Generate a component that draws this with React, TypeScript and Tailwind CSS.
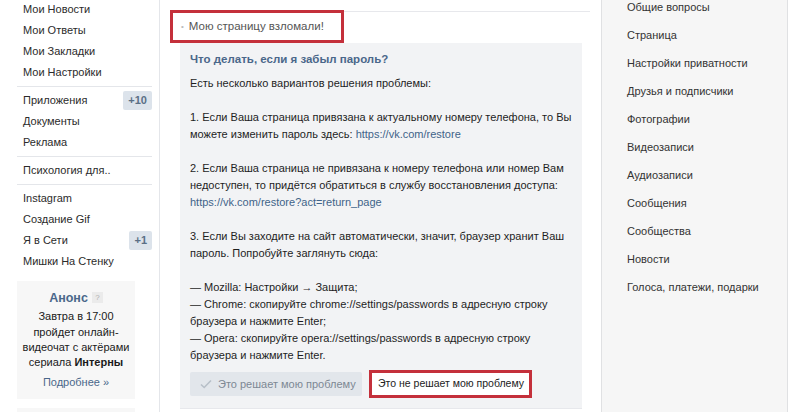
import React from "react";

const leftGroups: { label: string; badge?: string }[][] = [
  [{ label: "Мои Новости" }, { label: "Мои Ответы" }, { label: "Мои Закладки" }, { label: "Мои Настройки" }],
  [{ label: "Приложения", badge: "+10" }, { label: "Документы" }, { label: "Реклама" }],
  [{ label: "Психология для.." }],
  [{ label: "Instagram" }, { label: "Создание Gif" }, { label: "Я в Сети", badge: "+1" }, { label: "Мишки На Стенку" }],
];

const rightItems = [
  "Общие вопросы",
  "Страница",
  "Настройки приватности",
  "Друзья и подписчики",
  "Фотографии",
  "Видеозаписи",
  "Аудиозаписи",
  "Сообщения",
  "Сообщества",
  "Новости",
  "Голоса, платежи, подарки",
];

function LeftMenu() {
  return (
    <div className="w-[160px] shrink-0 border-r border-[#e4e6ea] pl-[17px] pr-[7px]">
      <div className="-mt-[1.5px]">
        {leftGroups.map((group, gi) => (
          <div key={gi}>
            {gi > 0 && <div className="my-[3px] h-px bg-[#e4e6ea]" />}
            {group.map((item) => (
              <div key={item.label} className="flex h-[21px] items-center justify-between pl-[6px] text-[#2b2b2b]">
                <span>{item.label}</span>
                {item.badge && (
                  <span className="flex h-[19px] items-center rounded-[2px] bg-[#dce3eb] px-[5px] text-[11px] font-bold text-[#5a6f86]">
                    {item.badge}
                  </span>
                )}
              </div>
            ))}
          </div>
        ))}
      </div>

      {/* announcement */}
      <div className="mt-[9px] w-[118px] bg-[#f7f7f7] pb-[8px] pt-[8px] text-center">
        <div className="flex items-center justify-center gap-[4px]">
          <span className="text-[12.5px] font-bold text-[#4a678a]">Анонс</span>
          <span className="flex h-[11px] w-[11px] items-center justify-center bg-[#ebebeb] text-[8px] text-[#b0b0b0]">?</span>
        </div>
        <div className="mt-[2px] leading-[15.3px] text-[#1a1a1a]">
          Завтра в 17:00
          <br />
          пройдет онлайн-
          <br />
          видеочат с актёрами
          <br />
          сериала <b>Интерны</b>
        </div>
        <div className="mt-[4px] text-[#4a678a]">Подробнее »</div>
      </div>
      <div className="mt-[9px] h-[20px] w-[118px] bg-[#f7f7f7]" />
    </div>
  );
}

function CheckIcon() {
  return (
    <svg width="12" height="10" viewBox="0 0 12 10" fill="none">
      <path d="M1 5.5 4.2 8.5 11 1.5" stroke="#b7bfc8" strokeWidth="1.6" />
    </svg>
  );
}

function Middle() {
  const link = "text-[#3f6389]";
  return (
    <div className="flex-1">
      <div className="mx-[11px] mt-[11px] h-px bg-[#e7e8ec]" />
      <div className="-mt-[2px] ml-[10px] flex h-[33px] w-[174px] items-center whitespace-nowrap border-[3px] border-[#c4303b] pl-[8px] text-[11.5px] text-[#555]">
        <span className="mr-[5px] text-[8px] text-[#bbb]">•</span>
        <span>Мою страницу взломали!</span>
      </div>
      <div className="ml-[20px] w-[402px] border-b border-[#e7e8ec] bg-[#f2f3f5] px-[10px] pb-[10px] pt-[8px]">
        <div className="text-[11.5px] font-bold leading-[17px] text-[#4a678a]">Что делать, если я забыл пароль?</div>
        <div className="mt-[7px] whitespace-nowrap leading-[17px] text-[#1e1e1e]">
          Есть несколько вариантов решения проблемы:
          <br />
          <br />
          1. Если Ваша страница привязана к актуальному номеру телефона, то Вы
          <br />
          можете изменить пароль здесь: <span className={link}>https://vk.com/restore</span>
          <br />
          <br />
          2. Если Ваша страница не привязана к номеру телефона или номер Вам
          <br />
          недоступен, то придётся обратиться в службу восстановления доступа:
          <br />
          <span className={link}>https://vk.com/restore?act=return_page</span>
          <br />
          <br />
          3. Если Вы заходите на сайт автоматически, значит, браузер хранит Ваш
          <br />
          пароль. Попробуйте заглянуть сюда:
          <br />
          <br />
          — Mozilla: Настройки → Защита;
          <br />
          — Chrome: скопируйте chrome://settings/passwords в адресную строку
          <br />
          браузера и нажмите Enter;
          <br />
          — Opera: скопируйте opera://settings/passwords в адресную строку
          <br />
          браузера и нажмите Enter.
        </div>
        <div className="mt-[6px] flex items-center gap-[7px] whitespace-nowrap">
          <div className="flex h-[24px] w-[172px] items-center gap-[6px] rounded-[2px] bg-[#e2e6eb] pl-[10px] text-[11px] text-[#7d8894]">
            <CheckIcon />
            <span>Это решает мою проблему</span>
          </div>
          <div className="flex h-[28px] w-[163px] items-center border-[3px] border-[#c4303b] bg-white pl-[6px] text-[10.5px] text-[#222]">
            Это не решает мою проблему
          </div>
        </div>
      </div>
    </div>
  );
}

function RightMenu() {
  return (
    <div className="w-[187px] shrink-0 border-x border-[#e0e1e3] bg-[#f6f6f6] pl-[25px]">
      <div className="-mt-[7px]">
        {rightItems.map((t) => (
          <div key={t} className="flex h-[28px] items-center text-[#333]">
            {t}
          </div>
        ))}
      </div>
    </div>
  );
}

export default function App() {
  return (
    <div
      className="flex h-[412px] w-[800px] overflow-hidden bg-white pr-[12px] text-[11px]"
      style={{ fontFamily: '"Liberation Sans", Arial, sans-serif' }}
    >
      <LeftMenu />
      <Middle />
      <RightMenu />
    </div>
  );
}
